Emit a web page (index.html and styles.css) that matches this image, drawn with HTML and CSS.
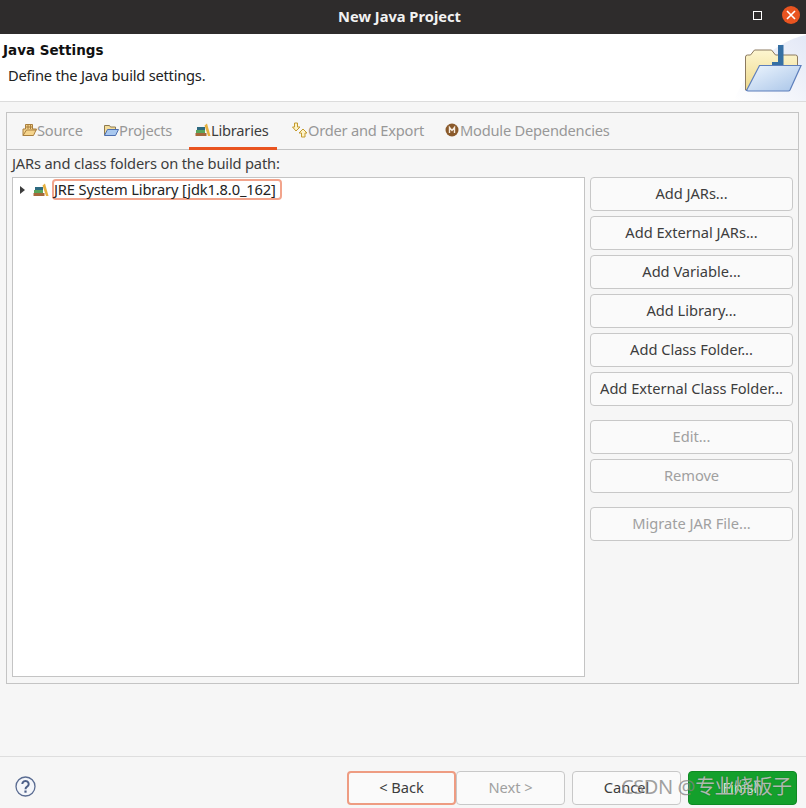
FILE: index.html
```html
<!DOCTYPE html>
<html lang="en">
<head>
<meta charset="utf-8">
<title>New Java Project</title>
<link rel="stylesheet" href="styles.css">
</head>
<body>
<div class="window">
  <header class="titlebar">
    <span class="title">New Java Project</span>
    <span class="maximize"></span>
    <span class="close">
      <svg width="12" height="12" viewBox="0 0 12 12"><path d="M2 2l8 8M10 2l-8 8" stroke="#fff" stroke-width="1.6" fill="none"/></svg>
    </span>
  </header>
  <section class="banner">
    <div class="banner-text">
      <h1>Java Settings</h1>
      <p>Define the Java build settings.</p>
    </div>
    <svg class="banner-art" width="72" height="67" viewBox="0 0 72 67">
      <defs>
        <linearGradient id="bg" x1="1" y1="0" x2="0" y2="1"><stop offset="0" stop-color="#e3e8f6"/><stop offset="1" stop-color="#fff"/></linearGradient>
        <linearGradient id="back" x1="0" y1="0" x2="0" y2="1"><stop offset="0" stop-color="#fdf6d0"/><stop offset="1" stop-color="#eed98c"/></linearGradient>
        <linearGradient id="front" x1="0" y1="0" x2="1" y2="1"><stop offset="0" stop-color="#eef6fe"/><stop offset="1" stop-color="#a8c4e8"/></linearGradient>
      </defs>
      <path d="M0 67C12 35 40 8 72 1V67Z" fill="url(#bg)"/>
      <path d="M11.500 56V23a2 2 0 0 1 2-2h3l4-5h17l4 5h20a2 2 0 0 1 2 2v10L50 56Z" fill="url(#back)" stroke="#8c7a60"/>
      <path d="M44 11h5.500v22H38v-5h6Z" fill="#356fa3"/>
      <path d="M12.500 56.500L25.500 31.500h41.500L56 56a2 2 0 0 1-2 1H14Z" fill="url(#front)" stroke="#5d7fbc" stroke-width="1.200"/>
    </svg>
  </section>
  <main class="content">
    <div class="folder">
      <nav class="tabs">
        <span class="tab tab-source">
          <svg width="15" height="14" viewBox="0 0 15 14"><path d="M1 12.500V6h2.500V1.500h7V6h4l-3 6.500Z" fill="#f5d48c" stroke="#a97f3e"/><path d="M6 1.500V6M8.500 1.500V6M3.500 4h7M1 12.500L4.500 7h10" stroke="#a97f3e" fill="none"/></svg>Source
        </span>
        <span class="tab tab-projects">
          <svg width="16" height="14" viewBox="0 0 16 14"><path d="M1.500 12V2.500h5l1 1.500h5v3" fill="#f3dc9a" stroke="#8d7a50"/><path d="M1.500 12.500l3-6h11l-3 6Z" fill="#a9c8ef" stroke="#4d6fb0"/></svg>Projects
        </span>
        <span class="tab tab-active">
          <svg width="16" height="14" viewBox="0 0 16 14"><rect x="2" y="4" width="8" height="3" fill="#2d6a80"/><rect x="1" y="7" width="9" height="3" fill="#5aa55a"/><rect x="0.500" y="10" width="11" height="3" fill="#a5683a"/><path d="M9.500 2.500L12 0.500 15.500 13H13Z" fill="#e6b040"/></svg>Libraries
        </span>
        <span class="tab tab-order">
          <svg width="16" height="16" viewBox="0 0 16 16"><path d="M2.500 1h3v4H8L4 9 0.500 5h2Z" fill="#fdf3c8" stroke="#c49a2c"/><path d="M11 7l4 4h-2v4h-3.500v-4H7Z" fill="#fdf3c8" stroke="#c49a2c"/></svg>Order and Export
        </span>
        <span class="tab tab-module">
          <svg width="14" height="14" viewBox="0 0 14 14"><circle cx="7" cy="7" r="6.500" fill="#8a5a2b"/><path d="M4.500 10V4.500l2.500 3 2.500-3V10" fill="none" stroke="#f6ece0" stroke-width="1.400"/></svg>Module Dependencies
        </span>
      </nav>
      <div class="panel">
        <label class="path-label">JARs and class folders on the build path:</label>
        <div class="panel-columns">
          <div class="tree">
            <div class="tree-row">
              <span class="arrow"></span>
              <svg class="lib-icon" width="16" height="14" viewBox="0 0 16 14"><rect x="2" y="4" width="8" height="3" fill="#2d6a80"/><rect x="1" y="7" width="9" height="3" fill="#5aa55a"/><rect x="0.500" y="10" width="11" height="3" fill="#a5683a"/><path d="M9.500 2.500L12 0.500 15.500 13H13Z" fill="#e6b040"/></svg>
              <span class="tree-label">JRE System Library [jdk1.8.0_162]</span>
            </div>
          </div>
          <div class="side">
            <button class="btn">Add JARs...</button>
            <button class="btn">Add External JARs...</button>
            <button class="btn">Add Variable...</button>
            <button class="btn">Add Library...</button>
            <button class="btn">Add Class Folder...</button>
            <button class="btn">Add External Class Folder...</button>
            <button class="btn off gap-top">Edit...</button>
            <button class="btn off">Remove</button>
            <button class="btn off gap-top">Migrate JAR File...</button>
          </div>
        </div>
      </div>
    </div>
  </main>
  <footer class="footer">
    <svg class="help" width="21" height="21" viewBox="0 0 21 21"><circle cx="10.500" cy="10.500" r="9.500" fill="#f4f6fa" stroke="#5a6c92" stroke-width="1.300"/><path d="M7.300 8a3.200 3 0 1 1 4.800 2.600c-1.200.8-1.600 1.300-1.600 2.600" fill="none" stroke="#4c5f88" stroke-width="2"/><rect x="9.400" y="14.500" width="2.200" height="2.200" fill="#4c5f88"/></svg>
    <div class="actions">
      <div class="pair">
        <button class="btn wide focus">&lt; Back</button>
        <button class="btn wide off">Next &gt;</button>
      </div>
      <button class="btn wide">Cancel</button>
      <button class="btn wide finish">Finish</button>
    </div>
    <span class="watermark">CSDN @<span class="watermark-cjk">专业烧板子</span></span>
  </footer>
</div>
</body>
</html>
```
FILE: styles.css
```css
* { box-sizing: border-box; }
html, body { margin: 0; padding: 0; }
body {
  width: 806px;
  height: 808px;
  overflow: hidden;
  background: #f6f6f6;
  font-family: "Noto Sans", "Noto Sans CJK SC", sans-serif;
  font-size: 14.67px;
  color: #3d3d3d;
}
.window { display: flex; flex-direction: column; height: 808px; }

.titlebar {
  height: 34px;
  flex: none;
  background: #2e2c2c;
  position: relative;
  display: flex;
  align-items: center;
  justify-content: center;
}
.title { color: #f2f2f2; font-weight: 700; margin-left: -7px; padding-bottom: 2px; }
.maximize {
  position: absolute; left: 753px; top: 11px;
  width: 9px; height: 9px; border: 1px solid #fff;
}
.close {
  position: absolute; left: 782px; top: 6px;
  width: 18px; height: 18px; border-radius: 50%;
  background: #e95420;
  display: flex; align-items: center; justify-content: center;
}

.banner {
  height: 68px;
  flex: none;
  background: #fff;
  border-bottom: 1px solid #dcdcdc;
  display: flex;
  justify-content: space-between;
  align-items: flex-end;
  padding-left: 3px;
}
.banner-text { align-self: flex-start; }
.banner h1 { margin: 6px 0 0; font-family: "DejaVu Sans", sans-serif; font-size: 13.5px; line-height: 20px; font-weight: 700; color: #111; }
.banner p { margin: 5px 0 0 5px; line-height: 20px; color: #222; letter-spacing: -0.22px; }
.banner-art { display: block; }

.content { flex: 1; padding: 10px 7px 0 6px; min-height: 0; }
.folder { height: 572px; border: 1px solid #c4c4c4; display: flex; flex-direction: column; }
.tabs {
  height: 37px;
  flex: none;
  border-bottom: 1px solid #c4c4c4;
  display: flex;
  color: #989898;
  letter-spacing: -0.22px;
}
.tab { display: flex; align-items: center; height: 36px; padding-bottom: 2px; white-space: nowrap; }
.tab-source { margin-left: 15px; width: 81px; }
.tab-projects { width: 86px; }
.tab-active { width: 88px; margin-right: 15px; padding-left: 6px; color: #3d3d3d; height: 37px; border-bottom: 3px solid #e95420; padding-bottom: 0; }
.tab-order { width: 153px; }
.tab-module svg { margin-right: 1px; }

.panel { flex: 1; padding: 4px 5px 5px; display: flex; flex-direction: column; min-height: 0; }
.path-label { line-height: 18px; margin-bottom: 5px; letter-spacing: -0.16px; }
.panel-columns { flex: 1; display: flex; gap: 5px; min-height: 0; }
.tree { width: 573px; height: 500px; background: #fff; border: 1px solid #c4c4c4; padding-top: 1px; }
.tree-row { display: flex; align-items: center; height: 21px; }
.arrow {
  margin-left: 7px; margin-right: 8px;
  border-left: 5px solid #3d3d3d;
  border-top: 4.500px solid transparent;
  border-bottom: 4.500px solid transparent;
}
.lib-icon { margin-right: 3px; }
.tree-label {
  border: 2px solid #f2a48c;
  border-radius: 4px;
  height: 21px;
  line-height: 16px;
  padding: 0 4px 0 0;
  color: #222;
  letter-spacing: -0.13px;
  white-space: nowrap;
}
.side { width: 203px; display: flex; flex-direction: column; gap: 5px; }
.btn {
  height: 34px;
  flex: none;
  padding: 0 0 2px;
  background: #fafafa;
  border: 1px solid #c8c8c8;
  border-radius: 4px;
  font: inherit;
  color: #3d3d3d;
  letter-spacing: -0.03px;
}
.btn.off { color: #a0a0a0; }
.gap-top { margin-top: 9px; }

.footer {
  height: 52px;
  flex: none;
  border-top: 1px solid #dedede;
  position: relative;
  display: flex;
  justify-content: space-between;
  padding: 14px 9px 0 15px;
}
.help { margin-top: 5px; display: block; }
.actions { display: flex; gap: 7px; }
.pair { display: flex; }
.wide { width: 109px; }
.focus { border: 2px solid #ee9c82; }
.finish { background: #14a02c; border-color: #0f8a24; color: #d8eedd; }
.watermark {
  position: absolute;
  left: 621px;
  top: 15px;
  font-size: 20px;
  line-height: 30px;
  color: rgba(130, 130, 130, 0.75);
  white-space: nowrap;
  letter-spacing: -0.4px;
}
.watermark-cjk {
  letter-spacing: -0.8px;
  color: rgba(200, 205, 200, 0.85);
  text-shadow: 0 0 1px rgba(40, 60, 40, 0.7);
}
```
